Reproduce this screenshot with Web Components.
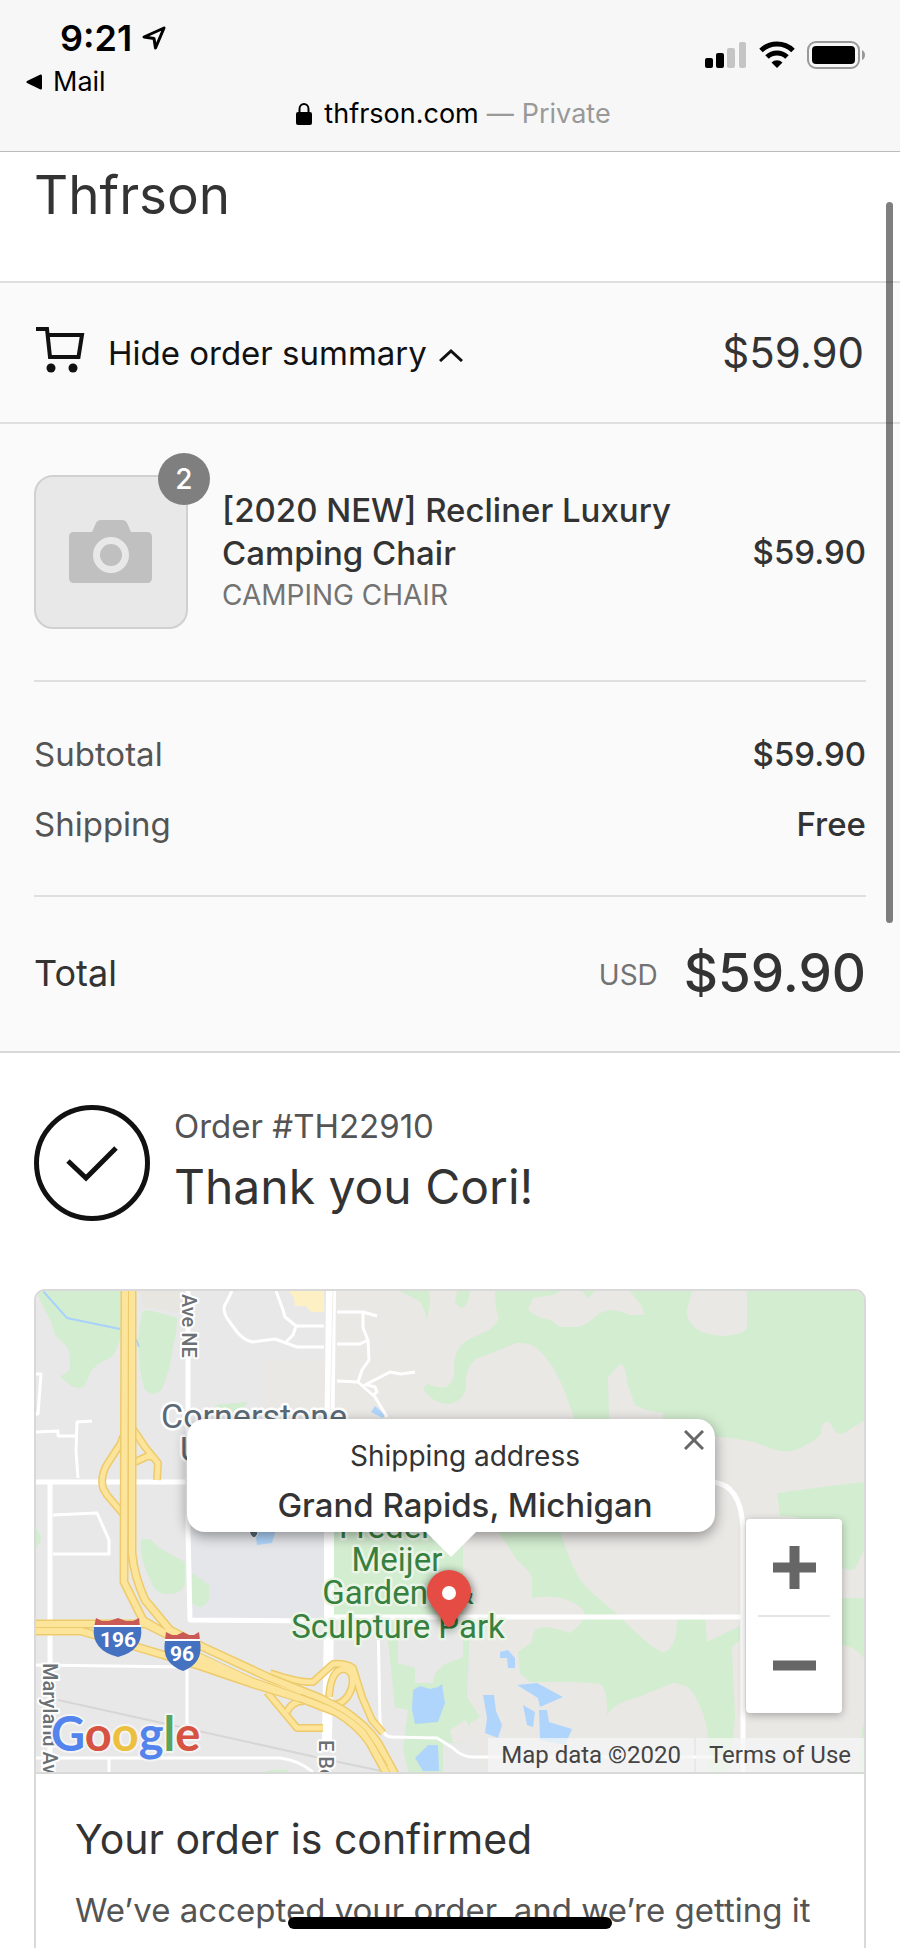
<!DOCTYPE html>
<html lang="en">
<head>
<meta charset="utf-8">
<meta name="viewport" content="width=device-width, initial-scale=1">
<title>Thfrson - Thank you</title>
<style>
  body {
    margin: 0;
    font-family: Inter, "Liberation Sans", sans-serif;
    color: #333;
    background: #fff;
    --line: #dfdfdf;
    --muted: #545454;
    --faint: #737373;
    --side: 34px;
  }
</style>
</head>
<body>
<phone-shell>
  <browser-bar slot="bar" time="9:21" back="Mail" host="thfrson.com" mode="Private"></browser-bar>
  <shop-banner>Thfrson</shop-banner>
  <order-summary amount="$59.90">
    <order-item slot="items" quantity="2" price="$59.90">
      [2020 NEW] Recliner Luxury Camping Chair
      <span slot="variant">CAMPING CHAIR</span>
    </order-item>
    <summary-line slot="lines" label="Subtotal">$59.90</summary-line>
    <summary-line slot="lines" label="Shipping">Free</summary-line>
    <order-total slot="total" currency="USD">$59.90</order-total>
  </order-summary>
  <order-heading>
    <span slot="number">Order #TH22910</span>
    Thank you Cori!
  </order-heading>
  <order-card>
    <address-map slot="map">
      <map-popup slot="popup" label="Shipping address">Grand Rapids, Michigan</map-popup>
    </address-map>
    <span slot="title">Your order is confirmed</span>
    We’ve accepted your order, and we’re getting it
  </order-card>
</phone-shell>

<script>
(function () {
  function define(name, html, setup) {
    const template = document.createElement("template");
    template.innerHTML = html;

    class Element extends HTMLElement {
      connectedCallback() {
        if (this.shadowRoot) return;
        this.attachShadow({ mode: "open" });
        this.shadowRoot.appendChild(template.content.cloneNode(true));
        // [data-attr] nodes take their text from the host attribute
        this.shadowRoot.querySelectorAll("[data-attr]").forEach((node) => {
          node.textContent = this.getAttribute(node.dataset.attr) || "";
        });
        if (setup) setup(this, this.shadowRoot);
      }
    }

    window.customElements.define(name, Element);
  }

  define("phone-shell", `
    <style>
      :host {
        display: flex;
        flex-direction: column;
        position: relative;
        height: 100vh;
        overflow: hidden;
      }
      main {
        flex: 1;
        min-height: 0;
        overflow: hidden;
      }
      .scroll {
        position: absolute;
        top: 202px;
        right: 7px;
        width: 7px;
        height: 37%;
        border-radius: 4px;
        background: rgba(0, 0, 0, 0.5);
      }
      .home {
        position: absolute;
        left: 32%;
        right: 32%;
        bottom: 19px;
        height: 12px;
        border-radius: 6px;
        background: #000;
      }
    </style>
    <slot name="bar"></slot>
    <main><slot></slot></main>
    <div class="scroll"></div>
    <div class="home"></div>
  `);

  define("browser-bar", `
    <style>
      :host {
        display: block;
        padding: 16px 34px 22px 25px;
        border-bottom: 1px solid #bbb;
        background: #f7f7f7;
        color: #000;
        font-size: 27px;
      }
      .top {
        display: flex;
        justify-content: space-between;
        align-items: flex-start;
      }
      .time {
        display: flex;
        align-items: center;
        gap: 10px;
        padding-left: 35px;
        font-size: 36px;
        font-weight: 600;
        line-height: 44px;
      }
      .back {
        display: flex;
        align-items: center;
        gap: 10px;
        margin-top: 6px;
        color: inherit;
        text-decoration: none;
        line-height: 32px;
      }
      .status {
        display: flex;
        align-items: center;
        gap: 12px;
        padding-top: 25px;
      }
      .url {
        display: flex;
        justify-content: center;
        align-items: center;
        gap: 8px;
        margin-top: 1px;
        padding-left: 16px;
        line-height: 30px;
      }
      .url svg {
        margin-right: 4px;
      }
      .mode {
        color: #999;
      }
      svg {
        display: block;
      }
    </style>
    <div class="top">
      <div>
        <div class="time">
          <span data-attr="time"></span>
          <svg width="24" height="24" viewBox="0 0 24 24" fill="none" stroke="#000" stroke-width="3" stroke-linejoin="round"><path d="M22 2 L2 11 L12 12.500 L13.500 22 Z"/></svg>
        </div>
        <a class="back" href="#mail">
          <svg width="18" height="18" viewBox="0 0 18 18"><path d="M15.500 1.500 Q17 1 17 3 V15 Q17 17 15.500 16.500 L2 10 Q0.500 9 2 8 Z"/></svg>
          <span data-attr="back"></span>
        </a>
      </div>
      <div class="status">
        <svg width="42" height="28" viewBox="0 0 42 28">
          <rect x="0" y="17" width="8" height="10" rx="2"/>
          <rect x="11" y="12" width="8" height="15" rx="2"/>
          <rect x="22" y="7" width="8" height="20" rx="2" fill="#c5c5c5"/>
          <rect x="34" y="1" width="7" height="26" rx="2" fill="#c5c5c5"/>
        </svg>
        <svg width="36" height="28" viewBox="0 0 36 28" fill="none" stroke="#000" stroke-width="5">
          <path d="M2 9.500 A23 23 0 0 1 34 9.500"/>
          <path d="M8 16 A14.500 14.500 0 0 1 28 16"/>
          <path d="M18 27 L12.500 21.500 A8 8 0 0 1 23.500 21.500 Z" fill="#000" stroke="none"/>
        </svg>
        <svg width="59" height="28" viewBox="0 0 59 28">
          <rect x="1" y="1" width="51" height="26" rx="8" fill="none" stroke="#999" stroke-width="2"/>
          <rect x="5" y="5" width="43" height="18" rx="4"/>
          <path d="M55 9 Q58 10.500 58 14 Q58 17.500 55 19 Z" fill="#999"/>
        </svg>
      </div>
    </div>
    <div class="url">
      <svg width="16" height="24" viewBox="0 0 16 24"><path d="M3.500 11 V7 A4.500 5 0 0 1 12.500 7 V11" fill="none" stroke="#000" stroke-width="2"/><rect x="0" y="10" width="16" height="13" rx="2"/></svg>
      <span data-attr="host"></span>
      <span class="mode">—</span>
      <span class="mode" data-attr="mode"></span>
    </div>
  `);

  define("shop-banner", `
    <style>
      :host {
        display: block;
        padding: 11px var(--side) 54px;
        border-bottom: 2px solid var(--line);
      }
      h1 {
        margin: 0;
        font-size: 53px;
        font-weight: 400;
        line-height: 64px;
      }
    </style>
    <h1><slot></slot></h1>
  `);

  define("order-summary", `
    <style>
      :host {
        display: block;
        border-bottom: 2px solid #d9d9d9;
        background: #fafafa;
      }
      .toggle {
        box-sizing: border-box;
        display: flex;
        align-items: center;
        width: 100%;
        padding: 42px 36px 41px;
        border: 0;
        border-bottom: 2px solid var(--line);
        background: none;
        color: #111;
        font: inherit;
        font-size: 33px;
        line-height: 56px;
        text-align: left;
      }
      .chevron {
        margin: 4px 0 0 12px;
      }
      .cart {
        margin: 0 23px 6px 0;
      }
      .amount {
        margin-left: auto;
        color: #333;
        font-size: 42px;
      }
      .toggle[aria-expanded="false"] .chevron {
        transform: rotate(180deg);
      }
      .body {
        padding: 0 var(--side);
      }
      .body[hidden] {
        display: none;
      }
      .items {
        padding: 51px 0;
      }
      .lines {
        display: flex;
        flex-direction: column;
        gap: 28px;
        padding: 51px 0 50px;
        border: solid var(--line);
        border-width: 2px 0;
      }
    </style>
    <button class="toggle" type="button" aria-expanded="true">
      <svg class="cart" width="49" height="47" viewBox="0 0 49 47" fill="none" stroke="#111" stroke-width="4">
        <path d="M0 2 H11 L14 30 H42.500 L46 8 H12"/>
        <circle cx="15" cy="41" r="4.500" fill="#111" stroke="none"/>
        <circle cx="37" cy="41" r="4.500" fill="#111" stroke="none"/>
      </svg>
      <span class="text">Hide order summary</span>
      <svg class="chevron" width="24" height="14" viewBox="0 0 24 14" fill="none" stroke="#111" stroke-width="3"><path d="M1 13 L12 3 L23 13"/></svg>
      <span class="amount" data-attr="amount"></span>
    </button>
    <div class="body">
      <div class="items"><slot name="items"></slot></div>
      <div class="lines"><slot name="lines"></slot></div>
      <slot name="total"></slot>
    </div>
  `, (host, root) => {
    const toggle = root.querySelector(".toggle");
    toggle.addEventListener("click", () => {
      const open = toggle.getAttribute("aria-expanded") !== "true";
      toggle.setAttribute("aria-expanded", String(open));
      root.querySelector(".text").textContent = open ? "Hide order summary" : "Show order summary";
      root.querySelector(".body").hidden = !open;
    });
  });

  define("order-item", `
    <style>
      :host {
        display: flex;
        align-items: center;
        gap: 34px;
      }
      .thumb {
        position: relative;
        box-sizing: border-box;
        display: flex;
        flex: none;
        align-items: center;
        justify-content: center;
        width: 154px;
        height: 154px;
        border: 2px solid #d0d0d0;
        border-radius: 19px;
        background: #e8e8e8;
      }
      .badge {
        position: absolute;
        top: -24px;
        right: -24px;
        width: 52px;
        height: 52px;
        border-radius: 50%;
        background: #7f7f7f;
        color: #fff;
        font-size: 28px;
        font-weight: 500;
        line-height: 52px;
        text-align: center;
      }
      .name {
        flex: 1;
        font-size: 33px;
        font-weight: 500;
        line-height: 43px;
      }
      .title {
        max-width: 480px;
      }
      .variant {
        color: var(--faint);
        font-size: 28px;
        font-weight: 400;
        line-height: 40px;
      }
      .price {
        font-size: 33px;
        font-weight: 500;
      }
    </style>
    <div class="thumb">
      <svg width="84" height="64" viewBox="0 0 84 64">
        <path d="M5 12 H23 Q25 8 26.500 4 Q28 0 32 0 H53 Q57 0 58.500 4 L62 12 H78 Q83 12 83 17 V58 Q83 63 78 63 H5 Q0 63 0 58 V17 Q0 12 5 12 Z" fill="#c0c0c0"/>
        <circle cx="42" cy="35" r="14.500" fill="none" stroke="#e8e8e8" stroke-width="7"/>
      </svg>
      <span class="badge" data-attr="quantity"></span>
    </div>
    <div class="name">
      <div class="title"><slot></slot></div>
      <div class="variant"><slot name="variant"></slot></div>
    </div>
    <div class="price" data-attr="price"></div>
  `);

  define("summary-line", `
    <style>
      :host {
        display: flex;
        justify-content: space-between;
        font-size: 33px;
        line-height: 42px;
      }
      .label {
        color: var(--muted);
      }
      .value {
        font-weight: 500;
      }
    </style>
    <span class="label" data-attr="label"></span>
    <span class="value"><slot></slot></span>
  `);

  define("order-total", `
    <style>
      :host {
        display: flex;
        align-items: center;
        padding: 43px 0 45px;
        font-size: 36px;
        line-height: 66px;
      }
      .currency {
        margin: 4px 26px 0 auto;
        color: var(--faint);
        font-size: 28px;
        line-height: 62px;
      }
      .value {
        font-size: 53px;
        font-weight: 500;
      }
    </style>
    <span>Total</span>
    <span class="currency" data-attr="currency"></span>
    <span class="value"><slot></slot></span>
  `);

  define("order-heading", `
    <style>
      :host {
        display: flex;
        align-items: center;
        gap: 24px;
        padding: 52px var(--side) 68px;
      }
      svg {
        flex: none;
      }
      .text {
        padding-bottom: 2px;
      }
      .number {
        margin-bottom: 8px;
        color: var(--muted);
        font-size: 33px;
        line-height: 42px;
      }
      h2 {
        margin: 0;
        font-size: 48px;
        font-weight: 400;
        line-height: 64px;
      }
    </style>
    <svg width="116" height="116" viewBox="0 0 116 116" fill="none" stroke="#111">
      <circle cx="58" cy="58" r="55.500" stroke-width="5"/>
      <path d="M34 56 L52 73 L82 43" stroke-width="5"/>
    </svg>
    <div class="text">
      <div class="number"><slot name="number"></slot></div>
      <h2><slot></slot></h2>
    </div>
  `);

  define("order-card", `
    <style>
      :host {
        display: block;
        margin: 0 var(--side);
        border: 2px solid #d9d9d9;
        border-radius: 11px;
        overflow: hidden;
      }
      .body {
        padding: 35px 39px 60px;
        border-top: 2px solid #d9d9d9;
      }
      h3 {
        margin: 0 0 16px;
        font-size: 41px;
        font-weight: 400;
        line-height: 60px;
      }
      p {
        margin: 0;
        color: var(--muted);
        font-size: 33px;
        line-height: 50px;
      }
    </style>
    <slot name="map"></slot>
    <div class="body">
      <h3><slot name="title"></slot></h3>
      <p><slot></slot></p>
    </div>
  `);

  define("map-popup", `
    <style>
      :host {
        display: block;
        position: relative;
        box-sizing: border-box;
        padding: 15px 16px 0 44px;
        border-radius: 18px;
        background: #fff;
        box-shadow: 0 4px 14px rgba(0, 0, 0, 0.4);
        text-align: center;
      }
      :host([hidden]) {
        display: none;
      }
      :host::after {
        content: "";
        position: absolute;
        top: 100%;
        left: 50%;
        margin-left: -25px;
        border: 25px solid transparent;
        border-top-color: #fff;
        border-bottom: 0;
      }
      .label {
        font-size: 28px;
        line-height: 44px;
      }
      .place {
        font-size: 33px;
        font-weight: 500;
        line-height: 54px;
      }
      button {
        position: absolute;
        top: 3px;
        right: 3px;
        display: flex;
        align-items: center;
        justify-content: center;
        width: 36px;
        height: 36px;
        padding: 0;
        border: 0;
        background: none;
      }
    </style>
    <div class="label" data-attr="label"></div>
    <div class="place"><slot></slot></div>
    <button type="button" aria-label="Close">
      <svg width="20" height="20" viewBox="0 0 20 20" stroke="#666" stroke-width="3"><path d="M1 1 L19 19 M19 1 L1 19"/></svg>
    </button>
  `, (host, root) => {
    root.querySelector("button").addEventListener("click", () => {
      host.hidden = true;
    });
  });

  define("map-zoom", `
    <style>
      :host {
        display: block;
        width: 96px;
        border-radius: 4px;
        background: #fff;
        box-shadow: 0 2px 8px rgba(0, 0, 0, 0.3);
      }
      button {
        display: flex;
        align-items: center;
        justify-content: center;
        width: 100%;
        height: 96px;
        padding: 0;
        border: 0;
        background: none;
      }
      hr {
        height: 2px;
        margin: 0 12px;
        border: 0;
        background: #e6e6e6;
      }
    </style>
    <button type="button" aria-label="Zoom in">
      <svg width="43" height="43" viewBox="0 0 43 43" stroke="#666" stroke-width="10"><path d="M0 21.500 H43 M21.500 0 V43"/></svg>
    </button>
    <hr>
    <button type="button" aria-label="Zoom out">
      <svg width="43" height="43" viewBox="0 0 43 43" stroke="#666" stroke-width="10"><path d="M0 21.500 H43"/></svg>
    </button>
  `);

  define("address-map", `
    <style>
      :host {
        display: block;
        position: relative;
        overflow: hidden;
        font-family: Roboto, "Liberation Sans", sans-serif;
      }
      .tiles {
        display: block;
        width: 100%;
      }
      .park { fill: #d3edd0; }
      .land { fill: #eae8e5; }
      .water { fill: #b0d5fc; }
      .road { fill: none; stroke: #fff; stroke-width: 3; stroke-linejoin: round; }
      .wide { stroke-width: 5; }
      .avenue { stroke-width: 10; }
      .hw { fill: none; stroke-linejoin: round; }
      .case { stroke: #edcb6c; }
      .core { stroke: #fce49a; }
      text {
        fill: #5a6a76;
        stroke: #fff;
        stroke-width: 5;
        stroke-linejoin: round;
        paint-order: stroke;
      }
      .street { font-size: 20px; font-weight: 500; fill: #6b7075; stroke-width: 4; }
      .town { font-size: 34px; text-anchor: middle; }
      .garden { font-size: 33px; fill: #37803f; stroke: #eaf5e8; }
      .shield { fill: #fff; stroke: none; font-weight: 700; font-size: 21px; text-anchor: middle; }
      .logo { font-family: Lato, sans-serif; font-size: 47px; font-weight: 700; stroke-width: 4; stroke: #f4f4f4; }
      ::slotted([slot="popup"]) {
        position: absolute;
        left: 50%;
        bottom: 50%;
        width: 528px;
        margin-left: -263px;
        font-family: Inter, sans-serif;
      }
      map-zoom {
        position: absolute;
        right: 22px;
        bottom: 59px;
      }
      .terms {
        position: absolute;
        right: 0;
        bottom: 0;
        display: flex;
        gap: 2px;
        font-size: 24px;
        line-height: 34px;
      }
      .terms > * {
        padding: 0 13px;
        background: rgba(245, 245, 245, 0.75);
        color: #444;
        text-decoration: none;
      }
    </style>
    <svg class="tiles" viewBox="0 0 828 481">
      <defs>
        <filter id="shade" x="-50%" y="-50%" width="200%" height="200%"><feGaussianBlur stdDeviation="5"/></filter>
      </defs>
      <rect width="828" height="481" fill="#e8e8e8"/>
      <path class="land" d="M294 0 H828 V481 H450 L436 451 V326 H427 V130 H228 V68 H294 Z"/>
      <path d="M102 0 H147 V22 L109 17 Z" fill="#e8e6e1"/>
      <path d="M152 240 H290 V328 H154 Z" fill="#e4e6ea"/>
      <path d="M253 0 H288 V21 L275 21 L270 15 L259 15 L258 7 Z" fill="#fdf0c4"/>

      <g class="park">
        <path d="M0 0 H86 V39 Q82 61 74 67 Q58 74 54 82 Q49 97 44 97 L37 96 L24 86 L33 80 Q36 60 29 54 L19 44 Q14 26 10 22 Z"/>
        <path d="M106 21 Q110 18 117 20 L141 27 Q141 40 137 56 Q134 80 126 98 Q119 107 109 99 Q103 84 102 48 Z"/>
        <path d="M178 114 L212 111 L206 119 L190 122 Z"/>
        <path d="M107 247 L127 259 L149 271 V294 Q144 303 134 303 Q122 304 117 295 Q105 270 105 259 Z"/>
        <path d="M156 282 L173 294 V309 Q168 317 162 316 L156 312 Z"/>
        <path d="M105 249 L114 248 L121 255 H104 Z"/>
        <path d="M0 237 L5 245 L4 252 L0 257 Z"/>
        <path d="M228 481 Q240 477 252 479 L253 481 Z"/>
        <path d="M364 0 H393 L394 12 L391 29 Q388 15 383 10 Z"/>
        <path d="M421 0 H434 Q432 16 425 17 L419 12 Z"/>
        <path d="M459 0 Q459 20 463 26 Q460 35 451 40 L431 49 Q419 58 418 72 Q420 88 412 95 Q406 99 392 93 Q386 96 389 101 Q398 113 414 113 Q430 108 430 95 Q428 79 440 68 L481 52 Q497 51 505 61 L517 76 L527 96 L539 130 L570 145 L684 146 Q712 149 721 152 Q747 164 760 159 L774 152 Q787 145 785 138 Q788 128 793 131 L800 141 Q806 146 814 138 L828 130 V0 Z"/>
        <path d="M741 202 L794 195 L828 191 V259 L819 278 Q811 281 806 276 L760 226 L744 225 Z"/>
        <path d="M800 307 H828 V367 Q818 355 806 354 Z"/>
        <path d="M828 430 Q824 440 824 481 H828 Z"/>
        <path d="M297 239 H427 V325 H294 Z"/>
        <path d="M350 330 L434 335 L431 406 L444 426 L434 432 L436 451 L407 452 V481 H372 L367 456 L372 419 L359 416 Z"/>
        <path d="M461 239 L481 269 Q496 282 496 289 V307 Q530 302 547 319 Q553 328 534 342 Q512 334 502 337 Q496 340 496 351 L482 361 L484 382 L494 391 Q540 390 564 393 Q572 399 571 424 Q578 412 600 407 L637 392 Q652 393 657 402 Q671 425 672 447 V481 H694 L699 426 L696 356 L704 349 V335 L671 351 L669 322 L641 329 Q640 361 626 361 Q612 355 579 321 Q556 303 544 289 Q530 263 524 239 Z"/>
      </g>
      <g class="land">
        <path d="M564 22 Q551 34 542 36 H524 Q515 27 504 27 L492 19 L497 7 L517 4 L525 0 H546 L552 7 L560 0 H594 L606 16 L608 24 H594 Q577 17 570 20 Z"/>
        <path d="M656 0 L651 19 Q650 29 658 36 Q667 44 687 45 Q711 43 711 36 V0 Z"/>
        <path d="M573 130 L572 86 L584 73 Q590 75 591 92 L599 114 L610 119 L627 122 V130 Z"/>
        <path d="M362 330 H427 V366 L409 373 L399 382 L397 392 H379 V377 L362 372 Z" fill="#e8e8e8"/>
        <path d="M414 439 L429 429 L436 439 V451 H417 Z"/>
      </g>
      <g class="water">
        <path d="M377 399 L384 395 L394 398 L402 396 L406 393 L409 412 L402 431 L379 433 L376 419 Z"/>
        <path d="M379 467 L392 454 H402 L403 480 H387 Z"/>
        <path d="M447 404 H458 L460 420 L466 434 L462 447 L449 442 L451 427 Z"/>
        <path d="M464 361 L472 359 L479 367 V377 H472 L471 367 H464 Z"/>
        <path d="M481 394 L501 392 L527 406 L504 416 L502 407 Z"/>
        <path d="M487 414 L499 421 L497 436 L491 434 Z"/>
        <path d="M503 419 H511 L513 431 L536 438 L529 454 L504 449 Z"/>
        <path d="M339 115 L349 124 L347 127 L335 121 Z"/>
        <path d="M219 238 H240 L236 252 L221 254 Z"/>
      </g>
      <path d="M7 0 L31 27 L84 38 M100 48 L103 56" fill="none" stroke="#a9d2fb" stroke-width="2"/>
      <path d="M22 409 L284 467 L350 481" fill="none" stroke="#d6d6d6" stroke-width="2"/>

      <path class="road" d="M196 0 L188 16 Q188 24 193 30 L201 41 Q208 49 216 51 L239 48 L261 56 H288 M240 0 L247 19 L249 26 L260 35 H288 M260 35 L257 44 L249 52"/>
      <path class="road" d="M0 83 H5 L2 123 H0 M0 141 L22 140 V145 H40 M56 130 L41 131 L40 160 L42 187 M17 224 L61 222 L73 249 V263 H17 M0 374 L151 376 V440 M73 467 V481"/>
      <path class="road" d="M301 21 H327 L341 25 M327 21 V37 L332 49 L333 69 L326 79 L322 91 L301 90 M301 53 H324 L332 49 M322 91 L339 106 L351 126 M327 95 L354 81 L365 83 L379 81 M331 94 L339 96 L341 101 L336 105"/>
      <path class="road" d="M342 330 L344 430 Q346 446 356 446 L401 447 L417 457 Q426 466 436 466 H706 M0 467 H244 Q262 469 277 481"/>
      <path class="road wide" d="M152 0 V239 L154 329 L290 330 M0 191 H677 Q706 194 707 240 V481 M290 326 H706 M14 192 V470"/>
      <path class="road avenue" d="M295 0 L293 180 V326 L291 450"/>
      <path d="M297 0 L294 128" stroke="#eee" stroke-width="1"/>

      <g id="ramps">
        <path class="hw case" stroke-width="8" d="M87 145 L85 152 L72 172 Q64 184 67 197 L71 204 L87 223 M97 138 L109 156 L122 172 L121 189 M99 171 L112 165 L116 166 M231 401 L261 437 H287 M251 421 Q256 410 268 410 M234 382 Q264 392 277 391 L297 373 Q310 372 317 377 L326 406 L336 429 L347 442 M293 406 Q295 378 308 378 Q319 380 316 396 Q311 412 298 414"/>
        <path class="hw core" stroke-width="5" d="M87 145 L85 152 L72 172 Q64 184 67 197 L71 204 L87 223 M97 138 L109 156 L122 172 L121 189 M99 171 L112 165 L116 166 M231 401 L261 437 H287 M251 421 Q256 410 268 410 M234 382 Q264 392 277 391 L297 373 Q310 372 317 377 L326 406 L336 429 L347 442 M293 406 Q295 378 308 378 Q319 380 316 396 Q311 412 298 414"/>
      </g>
      <path class="hw case" stroke-width="9" d="M89 0 L88 291 L107 329 L134 345 M96 0 V262 Q98 285 109 309 L134 339 L167 356 L234 387 L284 407 L307 419 Q330 434 342 452 L360 485 M0 333 H110 L134 345 M0 340 H45 L101 356 L164 375 L217 393 L264 407 L300 421 Q322 434 334 452 L352 485"/>
      <path class="hw core" stroke-width="6" d="M89 0 L88 291 L107 329 L134 345 M96 0 V262 Q98 285 109 309 L134 339 L167 356 L234 387 L284 407 L307 419 Q330 434 342 452 L360 485 M0 333 H110 L134 345 M0 340 H45 L101 356 L164 375 L217 393 L264 407 L300 421 Q322 434 334 452 L352 485"/>
      <path class="hw core" stroke-width="9" d="M134 352 L185 378 L217 391 L264 406"/>
      <path class="hw case" stroke-width="1" d="M134 348 L217 387 L280 409 Q310 420 330 440 L352 475"/>

      <text class="street" transform="translate(146 3) rotate(90)">Ave NE</text>
      <text class="street" transform="translate(7 372) rotate(90)">Maryland Av</text>
      <text class="street" transform="translate(283 449) rotate(90)">E Be</text>
      <text class="town" x="218" y="137">Cornerstone</text>
      <text class="town" x="218" y="170">University</text>
      <path d="M212 236 H223 Q222 246 218 247 Q214 246 212 236 Z" fill="#5a6a76" stroke="#fff"/>
      <text class="town garden" x="362" y="247">Frederik</text>
      <text class="town garden" x="361" y="280">Meijer</text>
      <text class="town garden" x="362" y="313">Gardens &amp;</text>
      <text class="town garden" x="362" y="347">Sculpture Park</text>

      <g transform="translate(57 327)">
        <path d="M3 0 L9 3 H16 L25 0 L33 3 H40 L46 0 L47 9 H1 Z" fill="#c95a55"/>
        <path d="M1 8 H48" stroke="#fff" stroke-width="2"/>
        <path d="M1 9 H48 Q51 32 25 39 Q-2 32 1 9 Z" fill="#4472c0"/>
        <text class="shield" x="25" y="29">196</text>
      </g>
      <g transform="translate(128 341)">
        <path d="M2 0 L8 3 H13 L19 0 L25 3 H30 L35 0 L36 8 H1 Z" fill="#c95a55"/>
        <path d="M1 8 H36" stroke="#fff" stroke-width="2"/>
        <path d="M1 9 H36 Q40 31 19 39 Q-3 31 1 9 Z" fill="#4472c0"/>
        <text class="shield" x="18" y="29">96</text>
      </g>
      <text class="logo" x="15" y="460"><tspan fill="#5383ec">G</tspan><tspan fill="#d65241">o</tspan><tspan fill="#ecbf41">o</tspan><tspan fill="#5383ec">g</tspan><tspan fill="#58a55d">l</tspan><tspan fill="#d65241">e</tspan></text>

      <path d="M413 340 Q390 316 390 304 A23 23 0 0 1 436 304 Q436 316 413 340 Z" opacity="0.6" filter="url(#shade)"/>
      <path d="M413 336 Q410 336 408 332 Q405 326 400 320 Q391 310 391 301 A22 22 0 0 1 435 301 Q435 310 426 320 Q421 326 418 332 Q416 336 413 336 Z" fill="#e54c43"/>
      <circle cx="413" cy="302" r="7" fill="#fff"/>
    </svg>
    <slot name="popup"></slot>
    <map-zoom></map-zoom>
    <div class="terms">
      <span>Map data ©2020</span>
      <a href="#terms">Terms of Use</a>
    </div>
  `);
})();
</script>
</body>
</html>
